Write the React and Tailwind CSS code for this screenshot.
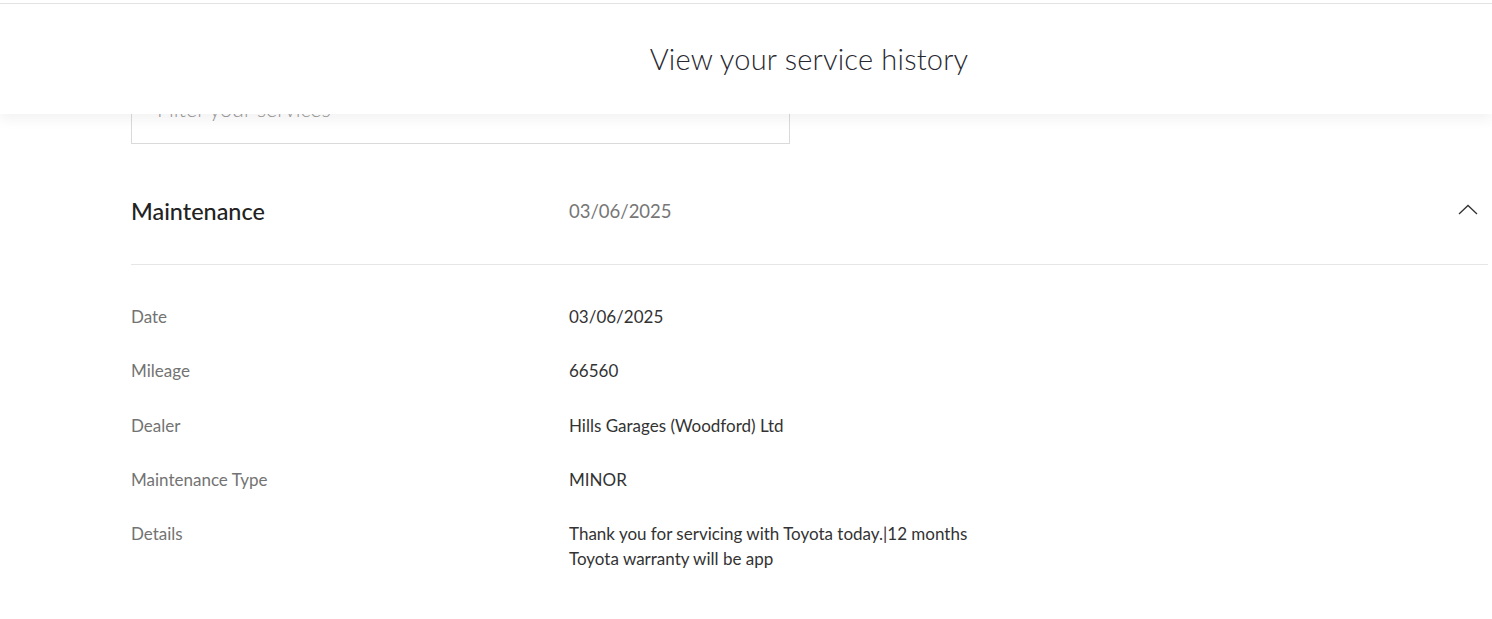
export default function App() {
  const rows = [
    { label: 'Date', value: '03/06/2025' },
    { label: 'Mileage', value: '66560' },
    { label: 'Dealer', value: 'Hills Garages (Woodford) Ltd' },
    { label: 'Maintenance Type', value: 'MINOR' },
    {
      label: 'Details',
      value: 'Thank you for servicing with Toyota today.|12 months Toyota warranty will be app',
    },
  ]

  return (
    <div className="relative min-h-[619px] bg-white overflow-hidden" style={{ fontFamily: 'Lato, "Noto Sans", sans-serif' }}>
      {/* Sticky header over the content */}
      <div className="absolute top-0 left-0 right-0 z-10 bg-white shadow-[0_6px_12px_rgba(0,0,0,0.05)]">
        <div className="h-[3px]" />
        <div className="h-[111px] border-t border-[#e3e3e3] pl-[126px] flex items-center justify-center">
          <h1 className="text-[29px] font-light text-[#282830] tracking-[0.2px]">View your service history</h1>
        </div>
      </div>

      <div className="pt-[79px] pl-[131px] pr-[4px]">
        {/* Filter */}
        <div className="w-[659px] h-[65px] border border-[#dadada] flex items-center pl-[25px]">
          <span className="text-[21.5px] text-[#9a9a9a] font-light -mt-[4px]">Filter your services</span>
        </div>

        {/* Service item */}
        <div className="mt-[40px]">
          <div className="flex items-start pt-[12px] pb-[38px] border-b border-[#e6e6e6]">
            <div className="w-[438px] text-[23.4px] leading-[30px] font-medium text-[#222]">Maintenance</div>
            <div className="flex-1 text-[18.5px] leading-[30px] text-[#767676]">03/06/2025</div>
            <div className="pr-[10px] pt-[8px]">
              <svg width="20" height="11" viewBox="0 0 20 11" fill="none">
                <polyline points="1,10 10,1.5 19,10" stroke="#333" strokeWidth="1.3" />
              </svg>
            </div>
          </div>

          <div className="pt-[39px] flex flex-col gap-[29.25px]">
            {rows.map((row) => (
              <div key={row.label} className="flex items-start text-[17px]">
                <div className="w-[438px] leading-[25px] text-[#737373]">{row.label}</div>
                <div className="w-[440px] leading-[25px] text-[#333]">{row.value}</div>
              </div>
            ))}
          </div>
        </div>
      </div>
    </div>
  )
}
